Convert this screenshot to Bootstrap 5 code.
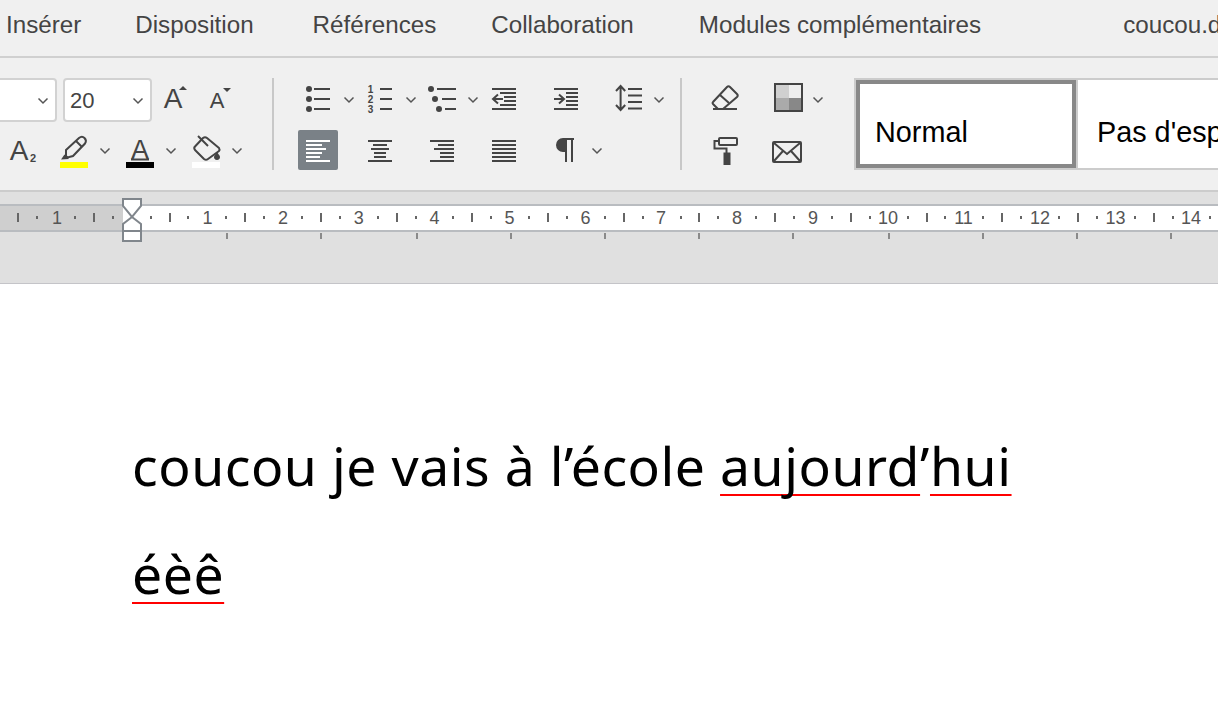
<!DOCTYPE html>
<html lang="fr">
<head>
<meta charset="utf-8">
<title>coucou</title>
<link href="https://cdn.jsdelivr.net/npm/bootstrap@5.3.0/dist/css/bootstrap.min.css" rel="stylesheet">
<style>
html,body{width:1218px;height:720px;overflow:hidden;background:#fff;font-family:"Liberation Sans",Arial,sans-serif}
.tabbar{height:58px;background:#f0f0f0;border-bottom:2px solid #d0d0d0;color:#444;font-size:24.2px;padding:0 0 5px 6px;white-space:nowrap}
.tabbar span{flex:none}
.tab-a{margin-right:54px}.tab-b{margin-right:59px}.tab-c{margin-right:55px}.tab-d{margin-right:65px}.tab-e{margin-right:142px}
.ribbon{height:134px;background:#f0f0f0;border-bottom:2px solid #ccc;padding-top:20px}
.grp-font{width:272px;flex:none}
.sep{width:2px;height:92px;background:#c8c8c8;flex:none}
.sep-a{margin-right:13px}.sep-b{margin-left:21px;margin-right:12px}
.combo{height:44px;background:#fff;border:2px solid #d2d2d2;border-radius:4px;padding:0 6px 0 5px;font-size:22px;color:#444;flex:none}
.combo-a{width:67px;margin-left:-10px;margin-right:6px}
.combo-b{width:89px;margin-right:3px}
.grp-tools{padding-top:1px;flex:none}
.grp-last{width:124px}
.row40{height:40px;gap:0}
.row40+.row40{margin-top:11px}
.row-f2{height:40px;margin-top:8px}
.tool{width:62px;height:40px;padding-left:11px;flex:none}
.tool-w{width:66px;height:40px;flex:none}
.ico{width:40px;height:40px;flex:none;display:block;overflow:visible}
.ico-sub{margin-left:3px;margin-right:11px}
.ico-t{width:40px;height:44px;flex:none;display:block}
.chev{width:12px;height:8px;flex:none;margin-left:5px;margin-top:2px;fill:none;stroke:#555;stroke-width:1.5}
.combo .chev{margin-left:0}
.ln{stroke:#444;stroke-width:2;fill:none}
.fl{fill:#444}
.wl{stroke:#fff;stroke-width:2;fill:none}
.ta{font-family:"Liberation Sans",sans-serif;fill:#444}
.active-tool{background:#7a8187;border-radius:2px}
.gallery{margin-left:36px;height:92px;width:380px;flex:none;border:2px solid #ccc;border-right:0;background:#fff;color:#000;font-size:28.8px;white-space:nowrap}
.sty-a{width:220px;height:88px;border:4px solid #888;padding:27px 0 0 15px;flex:none;box-sizing:border-box;margin-bottom:-1px}
.sty-b{border-left:2px solid #ccc;padding:31px 0 0 19px;flex:none;width:300px}
.band{height:92px;background:#e0e0e0;border-bottom:1px solid #c4c4c8}
.band svg{display:block}
.rn{font-family:"Liberation Sans",sans-serif;font-size:18px;fill:#555;text-anchor:middle}
.doc{padding:128px 0 0 132px;font-family:"Noto Sans",sans-serif;font-size:53.5px;letter-spacing:.54px;line-height:108px;color:#000;white-space:nowrap}
.doc p{margin:0}
.sp{text-decoration:underline;text-decoration-color:#f00;text-decoration-thickness:2px;text-underline-offset:8px;text-decoration-skip-ink:none}
</style>
</head>
<body>
<svg width="0" height="0" class="position-absolute">
<defs><symbol id="chv" viewBox="0 0 12 8"><path d="M1.5 1.5 6 6l4.500-4.500"/></symbol></defs>
</svg>

<div class="tabbar d-flex align-items-center overflow-hidden">
<span class="tab-a">Insérer</span><span class="tab-b">Disposition</span><span class="tab-c">Références</span><span class="tab-d">Collaboration</span><span class="tab-e">Modules complémentaires</span><span>coucou.docx</span>
</div>

<div class="ribbon d-flex overflow-hidden">
 <div class="grp-font">
  <div class="d-flex">
   <div class="combo combo-a d-flex align-items-center justify-content-end"><svg class="chev"><use href="#chv"/></svg></div>
   <div class="combo combo-b d-flex align-items-center justify-content-between"><span>20</span><svg class="chev"><use href="#chv"/></svg></div>
   <svg class="ico-t" viewBox="0 0 40 44"><text class="ta" x="18" y="30" font-size="28" text-anchor="middle">A</text><path class="fl" d="M24 12l4-4 4 4z"/></svg>
   <svg class="ico-t ms-1" viewBox="0 0 40 44"><text class="ta" x="18" y="30" font-size="22" text-anchor="middle">A</text><path class="fl" d="M24 10h8l-4 4z"/></svg>
  </div>
  <div class="row-f2 d-flex align-items-center">
   <svg class="ico ico-sub" viewBox="0 0 40 40"><text class="ta" x="16" y="30" font-size="28" text-anchor="middle">A</text><text x="30" y="32" font-size="11" font-weight="700" fill="#444" text-anchor="middle" font-family="Liberation Sans">2</text></svg>
   <div class="tool-w d-flex align-items-center"><svg class="ico" viewBox="0 0 40 40"><path class="ln" d="M12 20 25 8q3-2.500 5.500 0t.500 5.500L19 26l-5.500 1.500-1.500-1.500z"/><path class="ln" d="m22 11 6 6"/><path class="fl" d="m7 29.500 3.500-5 4.500 4.500z"/><rect x="6" y="32" width="28" height="6" fill="#ff0"/></svg><svg class="chev"><use href="#chv"/></svg></div>
   <div class="tool-w d-flex align-items-center"><svg class="ico" viewBox="0 0 40 40"><text class="ta" x="20" y="29" font-size="27" text-anchor="middle">A</text><path class="ln" d="M11 29.500h18"/><rect x="6" y="32" width="28" height="6" fill="#000"/></svg><svg class="chev"><use href="#chv"/></svg></div>
   <div class="tool-w d-flex align-items-center"><svg class="ico" viewBox="0 0 40 40"><path class="ln" stroke-linejoin="round" d="M21 8 33 18q1 1.500 0 3L22 29q-2 1.500-4 0L9 20q-1.500-2 0-3.500L17 8q2-1.500 4 0z"/><path class="ln" d="m12 6 10 10"/><path class="fl" d="M31 22l2.800 4a3 3 0 1 1-5.600 0z"/><rect x="6" y="32" width="28" height="6" fill="#fff"/></svg><svg class="chev"><use href="#chv"/></svg></div>
  </div>
 </div>
 <div class="sep sep-a"></div>

 <div class="grp-tools">
  <div class="row40 d-flex">
   <div class="tool d-flex align-items-center"><svg class="ico" viewBox="0 0 40 40"><circle class="fl" cx="11" cy="10" r="3"/><circle class="fl" cx="11" cy="20" r="3"/><circle class="fl" cx="11" cy="30" r="3"/><path class="ln" d="M16 10h16M16 20h16M16 30h16"/></svg><svg class="chev"><use href="#chv"/></svg></div>
   <div class="tool d-flex align-items-center"><svg class="ico" viewBox="0 0 40 40"><g font-size="10" font-weight="700" fill="#444" font-family="Liberation Sans" text-anchor="middle"><text x="10.500" y="14">1</text><text x="10.500" y="24">2</text><text x="10.500" y="34">3</text></g><path class="ln" d="M20 10h12M20 20h12M20 30h12"/></svg><svg class="chev"><use href="#chv"/></svg></div>
   <div class="tool d-flex align-items-center"><svg class="ico" viewBox="0 0 40 40"><circle class="fl" cx="9" cy="10" r="3"/><circle class="fl" cx="13" cy="20" r="3"/><circle class="fl" cx="17" cy="30" r="3"/><path class="ln" d="M15 10h19M20 20h14M23 30h11"/></svg><svg class="chev"><use href="#chv"/></svg></div>
   <div class="tool d-flex align-items-center"><svg class="ico" viewBox="0 0 40 40"><path class="ln" d="M8 10h24M8 30h24M16 14h16M20 18h12M20 22h12M16 26h16M9 20h10M14 15.500 9 20l5 4.500"/></svg></div>
   <div class="tool d-flex align-items-center"><svg class="ico" viewBox="0 0 40 40"><path class="ln" d="M8 10h24M8 30h24M20 14h12M20 18h12M20 22h12M20 26h12M8 20h10M13 15.500 18 20l-5 4.500"/></svg></div>
   <div class="tool d-flex align-items-center"><svg class="ico" viewBox="0 0 40 40"><path class="ln" d="M12.600 8v22M8 12l4.600-5 4.600 5M8 26l4.600 5 4.600-5M20 10h14M20 16.500h14M20 23h14M20 29.500h14"/></svg><svg class="chev"><use href="#chv"/></svg></div>
  </div>
  <div class="row40 d-flex">
   <div class="tool d-flex align-items-center"><svg class="ico active-tool" viewBox="0 0 40 40"><path class="wl" d="M8 11h24M8 15h16M8 19h20M8 23h16M8 27h14M8 31h24"/></svg></div>
   <div class="tool d-flex align-items-center"><svg class="ico" viewBox="0 0 40 40"><path class="ln" d="M8 11h24M13 15h14M11 19h18M14 23h12M14 27h12M8 31h24"/></svg></div>
   <div class="tool d-flex align-items-center"><svg class="ico" viewBox="0 0 40 40"><path class="ln" d="M8 11h24M16 15h16M12 19h20M18 23h14M18 27h14M8 31h24"/></svg></div>
   <div class="tool d-flex align-items-center"><svg class="ico" viewBox="0 0 40 40"><path class="ln" d="M8 11h24M8 15h24M8 19h24M8 23h24M8 27h24M8 31h24"/></svg></div>
   <div class="tool d-flex align-items-center"><svg class="ico" viewBox="0 0 40 40"><path class="fl" d="M28 8H17a7 7 0 0 0 0 14h2V8z"/><path class="ln" d="M20 8v24M26 8v24M19 9h9"/></svg><svg class="chev"><use href="#chv"/></svg></div>
  </div>
 </div>
 <div class="sep sep-b"></div>

 <div class="grp-tools grp-last">
  <div class="row40 d-flex">
   <div class="tool d-flex align-items-center"><svg class="ico" viewBox="0 0 40 40"><path class="ln" stroke-linejoin="round" d="M8 23 22 8q1.500-1.500 3 0l7 7q1.500 1.500 0 3L18 30h-5l-5-5q-1-1 0-2z"/><path class="ln" d="m15 16 9 8M8 30h24"/></svg></div>
   <div class="tool d-flex align-items-center"><svg class="ico" viewBox="0 0 40 40"><rect x="8" y="5" width="14" height="14" fill="#d0d0d0"/><rect x="22" y="5" width="13" height="14" fill="#eee"/><rect x="8" y="19" width="14" height="14" fill="#aaa"/><rect x="22" y="19" width="13" height="14" fill="#888"/><rect class="ln" x="8" y="5" width="27" height="27"/></svg><svg class="chev"><use href="#chv"/></svg></div>
  </div>
  <div class="row40 d-flex">
   <div class="tool d-flex align-items-center"><svg class="ico" viewBox="0 0 40 40"><rect class="ln" x="14" y="8" width="18" height="7" rx="1"/><path class="ln" d="M14 11H9.500v7.500h12V23"/><rect class="fl" x="18.500" y="22.500" width="7" height="12.500"/></svg></div>
   <div class="tool d-flex align-items-center"><svg class="ico" viewBox="0 0 40 40"><rect class="ln" x="6" y="12" width="28" height="20" rx="1"/><path class="ln" d="m7 13 13 11 13-11M7 31l9-10M33 31l-9-10"/></svg></div>
  </div>
 </div>

 <div class="gallery d-flex">
  <div class="sty-a">Normal</div>
  <div class="sty-b">Pas d'espacement</div>
 </div>
</div>

<div class="band">
 <svg id="rul" width="1218" height="92" viewBox="0 192 1218 92">
  <rect x="0" y="205" width="1218" height="26" fill="#fff"/>
  <rect x="0" y="205" width="123" height="26" fill="#cfcfcf"/>
  <path d="M0 205h1218M0 231h1218" stroke="#b9bcc0" stroke-width="2"/>
  <g id="ticks"></g>
  <g class="rulenum">
   <text class="rn" x="57" y="223.500">1</text><text class="rn" x="207.400" y="223.500">1</text><text class="rn" x="283.100" y="223.500">2</text><text class="rn" x="358.800" y="223.500">3</text><text class="rn" x="434.500" y="223.500">4</text><text class="rn" x="509.500" y="223.500">5</text><text class="rn" x="585.500" y="223.500">6</text><text class="rn" x="661" y="223.500">7</text><text class="rn" x="737" y="223.500">8</text><text class="rn" x="813" y="223.500">9</text><text class="rn" x="888" y="223.500">10</text><text class="rn" x="963.500" y="223.500">11</text><text class="rn" x="1040" y="223.500">12</text><text class="rn" x="1115.500" y="223.500">13</text><text class="rn" x="1191" y="223.500">14</text>
  </g>
  <g fill="#fff" stroke="#80868c" stroke-width="2">
   <path d="M132 217 141 224V241H123V224Z"/><path d="M123 231H141"/>
   <path d="M123 199H141V206L132 217 123 206Z"/>
  </g>
 </svg>
</div>

<div class="doc">
 <p>coucou je vais à l’école <span class="sp">aujourd</span>’<span class="sp">hui</span></p>
 <p><span class="sp">éèê</span></p>
</div>

<script src="https://cdn.jsdelivr.net/npm/bootstrap@5.3.0/dist/js/bootstrap.bundle.min.js"></script>
<script>
(function(){
 var g=document.getElementById('ticks'),N='http://www.w3.org/2000/svg';
 function r(x,y,w,h,c){var e=document.createElementNS(N,'rect');e.setAttribute('x',x);e.setAttribute('y',y);e.setAttribute('width',w);e.setAttribute('height',h);e.setAttribute('fill',c);g.appendChild(e);}
 var o=131.7,u=75.7;
 for(var i=-2;i<15;i++){var b=o+i*u;
  [.25,.75].forEach(function(f){var x=Math.round(b+f*u)-1; if(x>0&&x<1218&&Math.abs(x-131)>6) r(x,216,2,3,'#666');});
  var x=Math.round(b+.5*u)-1; if(x>0&&x<1218) r(x,213,2,9,'#666');
 }
 [227,321,417,511,605,699,793,889,983,1077,1171].forEach(function(x){r(x-1,233,2,6,'#8a8a8a');});
})();
</script>
</body>
</html>
